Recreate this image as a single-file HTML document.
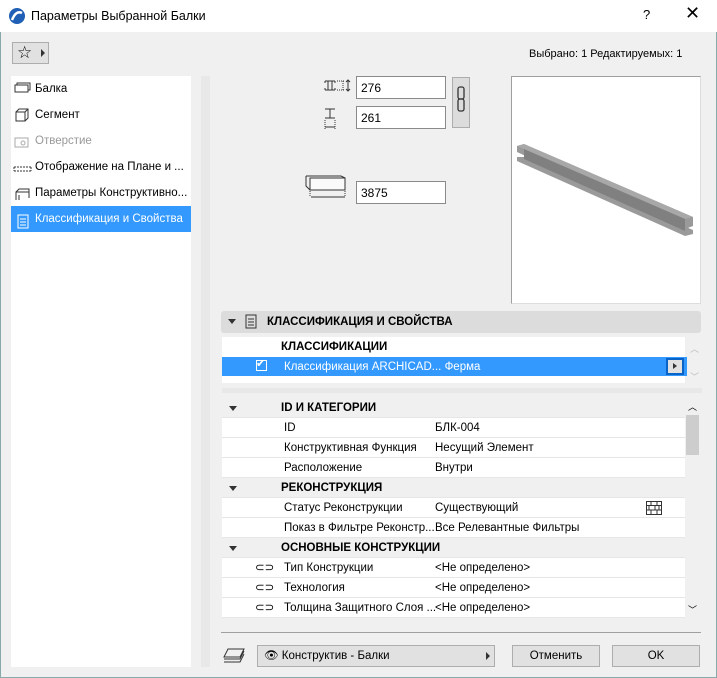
<!DOCTYPE html>
<html><head><meta charset="utf-8"><style>
*{box-sizing:border-box;margin:0;padding:0}
body{width:717px;height:678px;overflow:hidden;background:#f0f0f0;font-family:"Liberation Sans",sans-serif;font-size:11.5px;color:#000;position:relative}
.a{position:absolute}
.title{left:0;top:0;width:717px;height:32px;background:#fff}
.inp{background:#fff;border:1px solid #8a8a8a;height:23px;padding:4px 4px;font-size:12px}
.list div{height:26px;line-height:26px;padding-left:24px;position:relative}
.row{position:absolute;left:222px;width:463px;height:20px;line-height:21px;border-bottom:1px solid #e6e6e6;background:#fff}
.row span{position:absolute}
.hdr{background:#f0f0f0;font-weight:bold}
.tri{position:absolute;left:7px;top:8px;width:0;height:0;border-left:4px solid transparent;border-right:4px solid transparent;border-top:5px solid #333}
.btn{position:absolute;top:645px;height:22px;background:#e1e1e1;border:1px solid #adadad;text-align:center;line-height:20px}
</style></head><body>
<div class="a" style="left:0;top:0;width:717px;height:678px;border:1px solid #8aa;"></div>
<div class="a title"></div>
<svg class="a" style="left:8px;top:7px" width="18" height="18"><circle cx="9" cy="9" r="8" fill="#1f5fb5"/><path d="M4 13 Q8 3 14 6" stroke="#fff" stroke-width="2.5" fill="none"/></svg>
<div class="a" style="left:31px;top:9px;font-size:12.5px">Параметры Выбранной Балки</div>
<div class="a" style="left:643px;top:7px;font-size:13px">?</div>
<div class="a" style="left:685px;top:3px;font-size:18px">✕</div>

<div class="a" style="left:12px;top:42px;width:37px;height:22px;background:#e1e1e1;border:1px solid #adadad"></div>
<div class="a" style="left:17px;top:43px;font-size:17px">☆</div>
<div class="a" style="left:41px;top:49px;border-left:4px solid #333;border-top:4px solid transparent;border-bottom:4px solid transparent"></div>
<div class="a" style="left:529px;top:48px;font-size:11px">Выбрано: 1 Редактируемых: 1</div>

<div class="a list" style="left:11px;top:76px;width:180px;height:591px;background:#fff">
<div>Балка</div><div>Сегмент</div><div style="color:#999">Отверстие</div><div>Отображение на Плане и ...</div><div>Параметры Конструктивно...</div><div style="background:#3399ff;color:#fff">Классификация и Свойства</div>
</div>
<svg class="a" style="left:13px;top:80px" width="20" height="160" fill="none" stroke="#333">
<rect x="2" y="5" width="13" height="7"/><path d="M4 5v-2h13v7h-2"/>
<rect x="3" y="32" width="9" height="9"/><path d="M3 32l3-3h9v9l-3 3M12 32l3-3"/>
<g stroke="#aaa"><rect x="2" y="58" width="13" height="9"/><circle cx="10" cy="63" r="2"/></g>
<path d="M1 87h17M1 91h17M1 87v4M18 87v4" stroke-dasharray="2 1"/>
<path d="M3 120v-8l3-3h10v9M3 112h13M6 120v-5" />
<g stroke="#fff"><rect x="5" y="135" width="10" height="13"/><path d="M7 139h6M7 142h6M7 145h6"/></g>
</svg>
<div class="a" style="left:201px;top:76px;width:9px;height:591px;background:#e8e8e8"></div>

<svg class="a" style="left:322px;top:76px" width="30" height="130" fill="none" stroke="#333">
<path d="M3 5h10M3 14h10M6 5v9M10 5v9M3 5v2M13 5v2M3 12v2M13 12v2"/><path d="M15 5h8M15 14h8M21 5v9" stroke-dasharray="1 1"/><path d="M26 4v11M24 6l2-2 2 2M24 13l2 2 2-2"/>
<path d="M3 33h10M3 42h10M8 33v9"/><path d="M3 44v9M13 44v9" stroke-dasharray="1 1"/><path d="M3 51h10"/>
</svg>
<svg class="a" style="left:305px;top:175px" width="45" height="30" fill="none" stroke="#333"><rect x="5" y="3" width="35" height="12" fill="#fafafa"/><path d="M1 1h35l4 2M1 1v10l4 4"/><path d="M5 16v6M40 16v6" stroke-dasharray="1 1"/><path d="M6 22h34"/></svg>
<div class="a inp" style="left:356px;top:76px;width:90px">276</div>
<div class="a inp" style="left:356px;top:106px;width:90px">261</div>
<div class="a inp" style="left:356px;top:181px;width:90px">3875</div>
<div class="a" style="left:452px;top:77px;width:18px;height:51px;background:#dcdcdc;border:1px solid #adadad"></div>
<svg class="a" style="left:455px;top:85px" width="12" height="30" fill="none" stroke="#333" stroke-width="1.3"><rect x="3" y="2" width="6" height="12" rx="2"/><rect x="3" y="14" width="6" height="12" rx="2"/></svg>

<div class="a" style="left:511px;top:76px;width:190px;height:228px;background:#fff;border:1px solid #a0a0a0;border-right-color:#ddd;border-bottom-color:#ddd"></div>
<svg class="a" style="left:512px;top:77px" width="188" height="226"><g transform="translate(0,58)"><polygon points="5,11 12,9 181,82 181,91 173,94 5,17" fill="#9a9a9a"/><polygon points="5,11 12,9 181,82 173,84" fill="#a8a8a8"/><polygon points="12,22 181,95 181,99 173,101 5,26 5,22" fill="#9a9a9a"/><polygon points="12,14 173,84 173,96 12,24" fill="#808080"/></g></svg>

<div class="a" style="left:221px;top:311px;width:480px;height:22px;background:#dcdcdc;border-radius:3px"></div>
<div class="tri" style="left:228px;top:319px"></div>
<svg class="a" style="left:245px;top:314px" width="12" height="16" fill="none" stroke="#333"><rect x="1" y="1" width="10" height="13"/><path d="M3 5h6M3 8h6M3 11h6"/></svg>
<div class="a" style="left:267px;top:316px;font-weight:bold;font-size:11.5px">КЛАССИФИКАЦИЯ И СВОЙСТВА</div>

<div class="a" style="left:222px;top:337px;width:463px;height:46px;background:#fff"></div>
<div class="a" style="left:281px;top:341px;font-weight:bold">КЛАССИФИКАЦИИ</div>
<div class="a" style="left:222px;top:357px;width:465px;height:19px;background:#3399ff;color:#fff"></div>
<div class="a" style="left:256px;top:360px;width:11px;height:11px;border:1px solid #fff"></div>
<div class="a" style="left:256px;top:357px;color:#fff;font-size:11px">✔</div>
<div class="a" style="left:284px;top:361px;color:#fff">Классификация ARCHICAD... Ферма</div>
<div class="a" style="left:666px;top:358px;width:18px;height:17px;background:#e1e1e1;border:2px solid #0a64c8"></div>
<div class="a" style="left:673px;top:363px;border-left:4px solid #333;border-top:3px solid transparent;border-bottom:3px solid transparent"></div>
<div class="a" style="left:690px;top:342px;color:#bbb;font-size:9px">︿</div>
<div class="a" style="left:690px;top:370px;color:#bbb;font-size:9px">﹀</div>
<div class="a" style="left:222px;top:388px;width:480px;height:5px;background:#e8e8e8"></div>

<div class="row hdr" style="top:398px"><div class="tri"></div><span style="left:59px">ID И КАТЕГОРИИ</span></div>
<div class="row" style="top:418px"><span style="left:62px">ID</span><span style="left:213px">БЛК-004</span></div>
<div class="row" style="top:438px"><span style="left:62px">Конструктивная Функция</span><span style="left:213px">Несущий Элемент</span></div>
<div class="row" style="top:458px"><span style="left:62px">Расположение</span><span style="left:213px">Внутри</span></div>
<div class="row hdr" style="top:478px"><div class="tri"></div><span style="left:59px">РЕКОНСТРУКЦИЯ</span></div>
<div class="row" style="top:498px"><span style="left:62px">Статус Реконструкции</span><span style="left:213px">Существующий</span>
<svg style="position:absolute;left:424px;top:3px" width="16" height="14" fill="none" stroke="#333"><rect x="0.5" y="0.5" width="15" height="13"/><path d="M0 4.5h16M0 9h16M5 0v4M11 0v4M3 5v4M9 5v4M13 5v4M5 9v5M11 9v5"/></svg></div>
<div class="row" style="top:518px"><span style="left:62px">Показ в Фильтре Реконстр...</span><span style="left:213px">Все Релевантные Фильтры</span></div>
<div class="row hdr" style="top:538px"><div class="tri"></div><span style="left:59px">ОСНОВНЫЕ КОНСТРУКЦИИ</span></div>
<div class="row" style="top:558px"><span style="left:33px">⊂⊃</span><span style="left:62px">Тип Конструкции</span><span style="left:213px">&lt;Не определено&gt;</span></div>
<div class="row" style="top:578px"><span style="left:33px">⊂⊃</span><span style="left:62px">Технология</span><span style="left:213px">&lt;Не определено&gt;</span></div>
<div class="row" style="top:598px"><span style="left:33px">⊂⊃</span><span style="left:62px">Толщина Защитного Слоя ...</span><span style="left:213px">&lt;Не определено&gt;</span></div>
<div class="a" style="left:685px;top:398px;width:15px;height:220px;background:#f0f0f0"></div>
<div class="a" style="left:686px;top:415px;width:13px;height:40px;background:#cdcdcd"></div>
<div class="a" style="left:688px;top:400px;font-size:9px">︿</div>
<div class="a" style="left:688px;top:603px;font-size:9px">﹀</div>

<div class="a" style="left:221px;top:632px;width:480px;height:1px;background:#a0a0a0"></div>
<svg class="a" style="left:223px;top:647px" width="22" height="18" fill="none" stroke="#333"><path d="M5 2h16l-4 8H1z M1 12h16l4-8 M1 15h16l4-8"/></svg>
<div class="btn" style="left:257px;width:238px;text-align:left;padding-left:6px">👁 Конструктив - Балки</div>
<div class="a" style="left:486px;top:652px;border-left:4px solid #333;border-top:4px solid transparent;border-bottom:4px solid transparent"></div>
<div class="btn" style="left:512px;width:88px">Отменить</div>
<div class="btn" style="left:612px;width:88px">OK</div>
</body></html>
